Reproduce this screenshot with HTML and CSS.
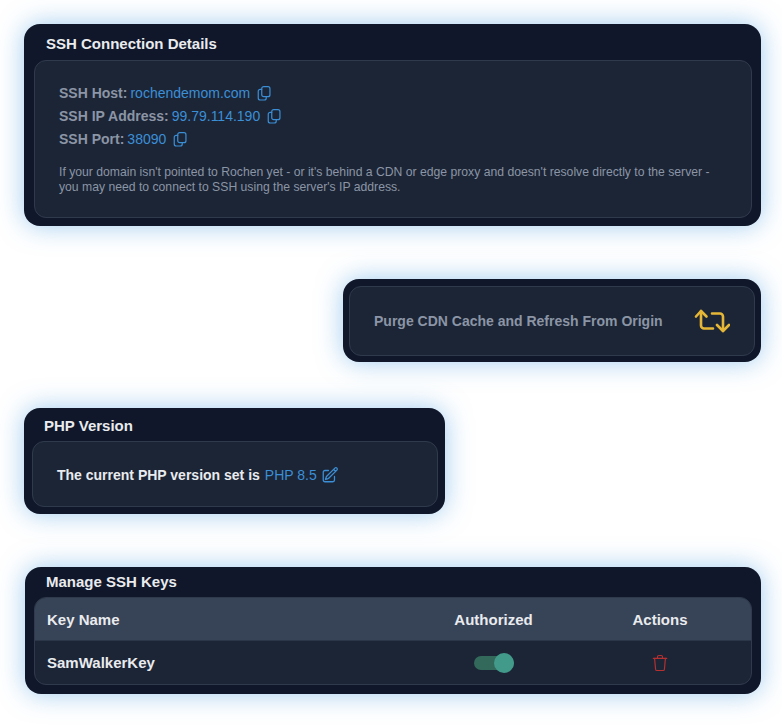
FILE: index.html
```html
<!DOCTYPE html>
<html lang="en">
<head>
<meta charset="utf-8">
<title>Rochen panels</title>
<link rel="stylesheet" href="styles.css">
</head>
<body>
<svg class="sprite" width="0" height="0" aria-hidden="true">
  <symbol id="copy" viewBox="0 0 13.500 15"><rect x="4.500" y="0.700" width="8.200" height="10" rx="2"/><path d="M4.500 3.300H3a2 2 0 0 0-2 2V12a2 2 0 0 0 2 2h4a2 2 0 0 0 2-2v-1.300"/></symbol>
</svg>
<main class="page">
  <section class="card card-ssh">
    <h2 class="card-title title-ssh">SSH Connection Details</h2>
    <div class="inner inner-ssh">
      <p class="detail"><span class="label">SSH Host:</span><a class="link">rochendemom.com</a><svg class="icon copy"><use href="#copy"/></svg></p>
      <p class="detail"><span class="label">SSH IP Address:</span><a class="link">99.79.114.190</a><svg class="icon copy"><use href="#copy"/></svg></p>
      <p class="detail"><span class="label">SSH Port:</span><a class="link">38090</a><svg class="icon copy"><use href="#copy"/></svg></p>
      <p class="note">If your domain isn't pointed to Rochen yet - or it's behind a CDN or edge proxy and doesn't resolve directly to the server - you may need to connect to SSH using the server's IP address.</p>
    </div>
  </section>

  <section class="card card-purge">
    <div class="inner inner-purge">
      <span class="purge-text">Purge CDN Cache and Refresh From Origin</span>
      <svg class="icon-purge" viewBox="0 0 36 24" fill="none" stroke="#e6b737" stroke-width="2.600" stroke-linecap="round" stroke-linejoin="round"><path d="M2 7.500 7 2 12.500 7.500"/><path d="M7 2v14.500a3 3 0 0 0 3 3H19"/><path d="M35 16 29 22 23 16"/><path d="M29 22V7.500a3 3 0 0 0-3-3H18"/></svg>
    </div>
  </section>

  <section class="card card-php">
    <h2 class="card-title title-php">PHP Version</h2>
    <div class="inner inner-php">
      <span class="php-text">The current PHP version set is</span>
      <a class="link php-link">PHP 8.5</a>
      <svg class="icon edit" viewBox="0 0 24 24" fill="none" stroke="currentColor" stroke-width="1.700" stroke-linecap="round" stroke-linejoin="round"><path d="m16.862 4.487 1.687-1.688a1.875 1.875 0 1 1 2.652 2.652L10.582 16.070a4.500 4.500 0 0 1-1.897 1.130L6 18l.8-2.685a4.500 4.500 0 0 1 1.130-1.897l8.932-8.931Zm0 0L19.500 7.125M18 14v4.750A2.250 2.250 0 0 1 15.750 21H5.250A2.250 2.250 0 0 1 3 18.750V8.250A2.250 2.250 0 0 1 5.250 6H10"/></svg>
    </div>
  </section>

  <section class="card card-keys">
    <h2 class="card-title title-keys">Manage SSH Keys</h2>
    <div class="inner inner-keys">
      <div class="row row-head">
        <span class="col-name">Key Name</span>
        <span class="col-auth">Authorized</span>
        <span class="col-act">Actions</span>
      </div>
      <div class="row row-body">
        <span class="col-name">SamWalkerKey</span>
        <span class="col-auth"><span class="toggle"><span class="knob"></span></span></span>
        <span class="col-act"><svg class="icon trash" viewBox="0 0 24 24" fill="none" stroke="currentColor" stroke-width="1.400" stroke-linecap="round" stroke-linejoin="round"><path d="M4 6.500h16"/><path d="M9 6V4.500A1.500 1.500 0 0 1 10.500 3h3A1.500 1.500 0 0 1 15 4.500V6"/><path d="m5.500 6.500 1.200 13.200A1.500 1.500 0 0 0 8.200 21h7.600a1.500 1.500 0 0 0 1.500-1.300l1.200-13.200"/></svg></span>
      </div>
    </div>
  </section>
</main>
</body>
</html>
```
FILE: styles.css
```css
* { box-sizing: border-box; }
html, body { margin: 0; padding: 0; background: #fff; }
body { font-family: "Liberation Sans", Arial, sans-serif; font-size: 14px; height: 727px; overflow: hidden; }
.sprite { position: absolute; }
.page { display: flex; flex-direction: column; padding: 24px 21px 0 24px; }
.card {
  background: #10172a;
  border-radius: 16px;
  box-shadow: 0 0 26px rgba(66, 153, 225, 0.5);
}
.card-title { margin: 0; color: #e9ebee; font-size: 15px; font-weight: 700; line-height: 20px; }
.inner { background: #1c2536; border: 1px solid #2f3b4d; border-radius: 12px; }
.link { color: #3b8fd6; }
.icon { display: block; flex: none; }

.card-ssh { height: 202px; padding: 10px 9px 8px 10px; }
.title-ssh { padding-left: 12px; margin-bottom: 6px; }
.inner-ssh { height: 158px; padding: 20.500px 24px 0; }
.detail { margin: 0; display: flex; align-items: center; height: 23px; line-height: 20px; white-space: pre; }
.label { font-weight: 700; color: #8b95a5; margin-right: 3px; }
.copy { width: 14px; height: 15px; margin-left: 7px; color: #3b8fd6; fill: none; stroke: currentColor; stroke-width: 1.200; stroke-linecap: round; stroke-linejoin: round; }
.note { margin: 14.500px 0 0; max-width: 660px; color: #8b95a5; font-size: 12.200px; line-height: 15px; }

.card-purge { align-self: flex-end; width: 418px; height: 83px; margin-top: 53px; padding: 7px 6px 5px; }
.inner-purge { height: 70px; display: flex; align-items: center; justify-content: space-between; padding: 0 24px; }
.purge-text { color: #8b95a5; font-weight: 700; font-size: 14px; }
.icon-purge { width: 36px; height: 24px; }

.card-php { width: 421px; height: 106px; margin-top: 46px; padding: 8px 7px 7px 8px; }
.title-php { padding-left: 12px; margin-bottom: 5px; }
.inner-php { height: 66px; display: flex; align-items: center; padding: 1px 0 0 24px; }
.php-text { color: #e9ebee; font-weight: 700; }
.php-link { margin-left: 5px; }
.edit { width: 18px; height: 18px; margin-left: 4px; color: #3b8fd6; }

.card-keys { margin-left: 1px; height: 127px; margin-top: 53px; padding: 5px 9px 9px 9px; }
.title-keys { padding-left: 12px; margin-bottom: 5px; }
.inner-keys { height: 88px; overflow: hidden; }
.row { display: flex; align-items: center; padding-left: 12px; color: #e9ebee; font-size: 15px; font-weight: 700; }
.row-head { height: 43px; background: #374357; border-bottom: 1px solid #2b3648; }
.row-body { height: 43px; }
.col-name { width: 367px; flex: none; }
.col-auth { width: 159px; flex: none; display: flex; justify-content: center; }
.col-act { width: 174px; flex: none; display: flex; justify-content: center; }
.toggle { display: block; position: relative; width: 40px; height: 14px; border-radius: 7px; background: #33695a; }
.knob { position: absolute; right: 0; top: -3px; width: 20px; height: 20px; border-radius: 50%; background: #429a8b; }
.trash { width: 20px; height: 20px; color: #b53030; }
```
